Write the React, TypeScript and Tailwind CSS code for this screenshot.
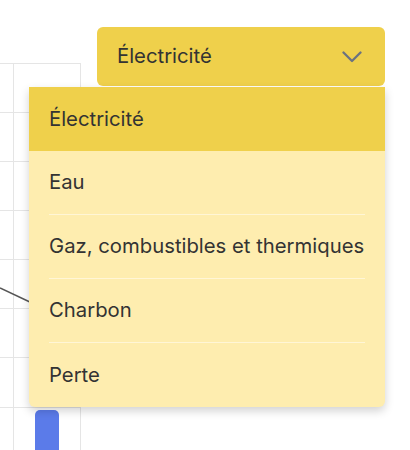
const options = ["Électricité", "Eau", "Gaz, combustibles et thermiques", "Charbon", "Perte"];

function ChartBackdrop() {
  const rows = [63, 112, 161, 210, 259, 308, 357, 407];
  return (
    <svg className="absolute left-0 top-0" width="120" height="450" viewBox="0 0 120 450">
      {rows.map((y) => (
        <line key={y} x1="0" x2="80" y1={y + 0.5} y2={y + 0.5} stroke="#e5e5e5" strokeWidth="1" />
      ))}
      <line x1="13.5" x2="13.5" y1="63" y2="450" stroke="#e5e5e5" strokeWidth="1" />
      <line x1="80.5" x2="80.5" y1="63" y2="450" stroke="#e5e5e5" strokeWidth="1" />
      <line x1="0" y1="288" x2="32" y2="303" stroke="#555" strokeWidth="1.5" />
      <rect x="35" y="410" width="24" height="60" rx="5" fill="#5b7be9" />
    </svg>
  );
}

function Chevron() {
  return (
    <svg width="20" height="12" viewBox="0 0 20 12" fill="none">
      <polyline
        points="1.5,1.5 10,10 18.5,1.5"
        stroke="#6b7280"
        strokeWidth="2.3"
        strokeLinecap="round"
        strokeLinejoin="round"
      />
    </svg>
  );
}

export default function App() {
  const selected = options[0];
  return (
    <div
      className="relative h-[450px] w-[410px] overflow-hidden bg-white text-[#333]"
      style={{ fontFamily: "Inter, 'Noto Sans', sans-serif" }}
    >
      <ChartBackdrop />

      <div className="relative ml-[97px] mt-[27px] w-[288px]">
        <button className="flex h-[59px] w-full items-center justify-between rounded-md bg-[#efd04b] pl-5 pr-[23px] text-[20.3px] text-[#333]">
          <span>{selected}</span>
          <Chevron />
        </button>

        <ul className="absolute right-0 top-[60px] w-[356px] overflow-hidden rounded-b-md bg-[#feedaf] shadow-[0_4px_10px_rgba(0,0,0,0.18)]">
          {options.map((opt, i) => (
            <li
              key={opt}
              className={i === 0 ? "bg-[#efd04b] px-5" : "px-5"}
            >
              <div
                className={
                  i > 0 && i < options.length - 1
                    ? "flex h-[64px] items-center border-b border-[#fff6d6] text-[20.3px]"
                    : "flex h-[64px] items-center text-[20.3px]"
                }
              >
                {opt}
              </div>
            </li>
          ))}
        </ul>
      </div>
    </div>
  );
}
